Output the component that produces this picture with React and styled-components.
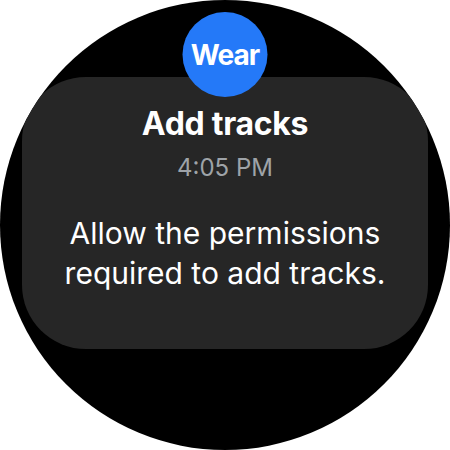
import React from "react";
import styled, { createGlobalStyle } from "styled-components";

const Global = createGlobalStyle`
  html, body { margin: 0; padding: 0; background: #ffffff; }
  body { font-family: Inter, "Noto Sans", sans-serif; }
`;

const Watch = styled.div`
  width: 450px;
  height: 450px;
  border-radius: 50%;
  background: #000000;
  overflow: hidden;
  position: relative;
  display: flex;
  flex-direction: column;
  align-items: center;
`;

const AppBadge = styled.div`
  position: absolute;
  top: 12px;
  left: 50%;
  transform: translateX(-50%);
  width: 85px;
  height: 85px;
  border-radius: 50%;
  background: #2479f8;
  display: flex;
  align-items: center;
  justify-content: center;
  color: #ffffff;
  font-family: Inter, sans-serif;
  font-weight: 700;
  font-size: 28px;
  letter-spacing: -1px;
  z-index: 2;
`;

const Card = styled.div`
  margin-top: 77px;
  width: 406px;
  height: 272px;
  box-sizing: border-box;
  border-radius: 64px;
  background: #262626;
  display: flex;
  flex-direction: column;
  align-items: center;
  padding-top: 28px;
`;

const Title = styled.div`
  color: #ffffff;
  font-weight: 700;
  font-size: 32px;
  line-height: 38px;
  letter-spacing: -0.3px;
`;

const Time = styled.div`
  color: #9ea3a8;
  font-size: 24px;
  line-height: 30px;
  margin-top: 10px;
`;

const Message = styled.div`
  color: #ffffff;
  font-size: 30px;
  line-height: 40px;
  text-align: center;
  margin-top: 30px;
`;

export default function App() {
  return (
    <>
      <Global />
      <Watch>
        <AppBadge>Wear</AppBadge>
        <Card>
          <Title>Add tracks</Title>
          <Time>4:05 PM</Time>
          <Message>
            Allow the permissions
            <br />
            required to add tracks.
          </Message>
        </Card>
      </Watch>
    </>
  );
}
